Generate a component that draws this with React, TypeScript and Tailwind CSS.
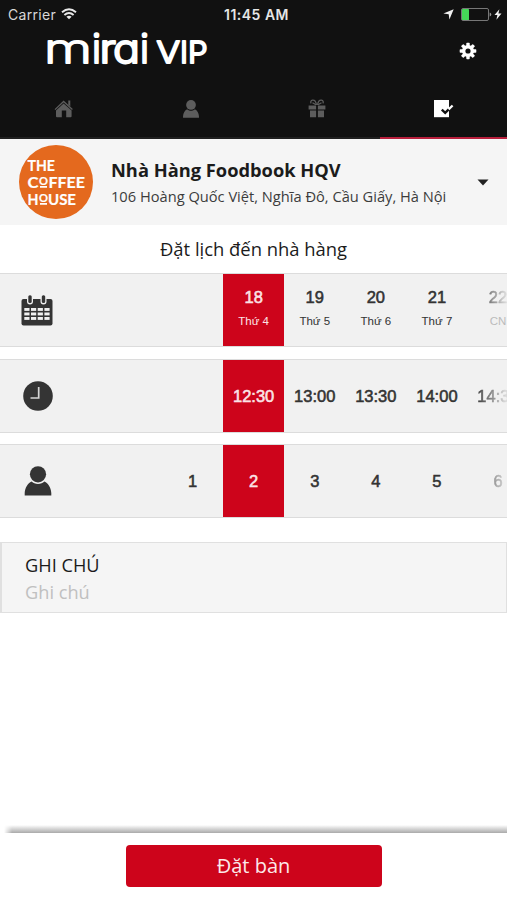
import React from 'react';
import clsx from 'clsx';

interface Slot {
  label: string;
  sub?: string;
  faded?: boolean;
}

interface PickerRowProps {
  icon: React.ReactNode;
  slots: Slot[];
  selected: string;
  className?: string;
}

const DATES: Slot[] = [
  { label: '' },
  { label: '18', sub: 'Thứ 4' },
  { label: '19', sub: 'Thứ 5' },
  { label: '20', sub: 'Thứ 6' },
  { label: '21', sub: 'Thứ 7' },
  { label: '22', sub: 'CN', faded: true },
];

const TIMES: Slot[] = [
  { label: '' },
  { label: '12:30' },
  { label: '13:00' },
  { label: '13:30' },
  { label: '14:00' },
  { label: '14:30', faded: true },
];

const GUESTS: Slot[] = [
  { label: '1' },
  { label: '2' },
  { label: '3' },
  { label: '4' },
  { label: '5' },
  { label: '6', faded: true },
];

// wordmark letters are stretched one by one
const WORDMARK = [
  { char: 'm', x: -1, width: 48, size: 40, weight: 200 },
  { char: 'i', x: 47, width: 9, size: 40, weight: 300 },
  { char: 'r', x: 54.5, width: 16.5, size: 40, weight: 300 },
  { char: 'a', x: 68, width: 27, size: 40, weight: 300 },
  { char: 'i', x: 95, width: 9, size: 40, weight: 300 },
  { char: 'V', x: 111.5, width: 23.5, size: 30, weight: 300 },
  { char: 'I', x: 135, width: 8, size: 30, weight: 300 },
  { char: 'P', x: 143, width: 19.5, size: 30, weight: 300 },
];

const UserIcon = ({ className }: { className?: string }) => (
  <svg viewBox="0 0 28 30" className={className} fill="currentColor">
    <circle cx="14" cy="8.300" r="8.100" />
    <path d="M7.600 15.600C9.200 17.200 11.400 18.100 14 18.100s4.800-.9 6.400-2.500c3.900 1.900 6.600 6.200 6.900 11.500V29.600H.7v-2.500C1 21.800 3.700 17.500 7.600 15.600Z" />
  </svg>
);

const HomeIcon = () => (
  <svg viewBox="0 0 20 18" className="ml-[2px] h-[18px] w-[20px]">
    <path d="M1 9.600 9.600 1.500 18.400 9.600" fill="none" stroke="currentColor" strokeWidth="1.300" />
    <path d="M14.300 0.400h2v6l-2-1.900z" fill="currentColor" />
    <path d="M2 10.400 9.600 3.600 17.600 10.400V16.200Q17.600 17.200 16.600 17.200H12.200V10.600H7.800V17.200H3Q2 17.200 2 16.200Z" fill="currentColor" />
  </svg>
);

const GiftIcon = () => (
  <svg viewBox="0 0 18 19" className="h-[19px] w-[18px]" fill="currentColor">
    <g fill="none" stroke="currentColor" strokeWidth="1.300">
      <path d="M8.500 6C8 3 6.500 1 4.600 1.200 2.700 1.400 2.300 3.200 3.200 4.300" />
      <path d="M9.500 6C10 3 11.500 1 13.400 1.200c1.900.2 2.300 2 1.400 3.100" />
      <path d="M4.500 3.800 8 5.800M13.500 3.800 10 5.800" />
    </g>
    <path d="M.6 6.400h7.500v4.200H.6zM9.900 6.400h7.500v4.200H9.900zM2 11.600h6.100v6.700H2zM9.900 11.600H16v6.700H9.900z" />
  </svg>
);

const BookingIcon = () => (
  <svg viewBox="0 0 21 19" className="h-[19px] w-[21px]">
    <path d="M1 1h15v17.200H1z" fill="#fff" />
    <path d="M8.800 10.600 12.200 13.800 16.200 9.800" fill="none" stroke="#111" strokeWidth="2.400" />
    <path d="M15.600 10.400 19.600 6.500" fill="none" stroke="#fff" strokeWidth="2.200" />
  </svg>
);

const GearIcon = () => (
  <svg viewBox="-9 -9 18 18" className="h-[18px] w-[18px]">
    <g fill="#fff">
      {[0, 45, 90, 135].map((deg) => (
        <rect key={deg} x="-1.700" y="-8.300" width="3.400" height="16.600" rx=".7" transform={`rotate(${deg})`} />
      ))}
      <circle r="6" />
    </g>
    <circle r="2.600" fill="#111" />
  </svg>
);

const CalendarIcon = () => (
  <svg viewBox="0 0 32 31" className="h-[31px] w-[32px]">
    <rect x=".5" y="4" width="31" height="26.500" rx="2" fill="#343434" />
    {[7, 20.5].map((x) => (
      <g key={x}>
        <rect x={x - 1} y="0" width="6" height="9.500" rx="3" fill="#f0f0f0" />
        <rect x={x + 0.3} y=".3" width="3.400" height="7.600" rx="1.500" fill="#343434" />
      </g>
    ))}
    {[13, 17.5, 22].map((y) =>
      [3.3, 10, 16.7, 23.4].map((x) => (
        <rect key={`${x}-${y}`} x={x} y={y} width="5.200" height="2.900" fill="#f0f0f0" />
      ))
    )}
  </svg>
);

const ClockIcon = () => (
  <svg viewBox="0 0 30 30" className="ml-[1px] h-[30px] w-[30px]">
    <circle cx="15" cy="15" r="14.800" fill="#343434" />
    <path d="M15.700 6v11H7.500" fill="none" stroke="#d5d5d5" strokeWidth="1.700" />
  </svg>
);

const StatusBar = () => (
  <div className="flex h-[28px] items-center pl-2 pr-[5px] font-['Inter',sans-serif] text-[14px] text-[#d8d8d8]">
    <div className="flex flex-1 items-center gap-[5px]">
      <span className="tracking-[0.3px]">Carrier</span>
      <svg viewBox="0 0 16 12" className="h-[12px] w-[16px]" fill="none" stroke="#e8e8e8" strokeWidth="1.900">
        <path d="M1 4.300Q8-1.900 15 4.300" />
        <path d="M3.400 7Q8 3 12.600 7" />
        <path d="M8 11.300 5.400 8.700Q8 6.600 10.600 8.700Z" fill="#e8e8e8" stroke="none" />
      </svg>
    </div>
    <span className="pl-[3px] text-[14px] font-semibold tracking-[0.5px] text-[#e6e6e6]">11:45 AM</span>
    <div className="flex flex-1 items-center justify-end">
      <svg viewBox="0 0 11 11" className="mr-[7px] h-[11px] w-[11px]">
        <path d="M10.700.3 6.400 10.500 5.700 5.300.4 4.600Z" fill="#f0f0f0" />
      </svg>
      <svg viewBox="0 0 31 13" className="mr-[2px] h-[13px] w-[31px]">
        <rect x=".5" y=".5" width="27" height="12" rx="1.500" fill="none" stroke="#777" />
        <rect x="1" y="1" width="7" height="11" rx=".6" fill="#45d858" />
        <path d="M28.700 4.500q1.600.4 1.600 2t-1.600 2z" fill="#999" />
      </svg>
      <svg viewBox="0 0 8 11" className="h-[11px] w-[8px]">
        <path d="M5.400.2.5 6H3.400L2.400 10.800 7.500 4.600H4.400Z" fill="#f4f4f4" />
      </svg>
    </div>
  </div>
);

const PickerRow: React.FC<PickerRowProps> = ({ icon, slots, selected, className }) => (
  <div className={clsx('flex h-[74px] shrink-0 overflow-hidden border-y border-[#dcdcdc] bg-[#f1f1f1]', className)}>
    <div className="flex w-[74px] shrink-0 items-center justify-center">{icon}</div>
    <div className="w-[88px] shrink-0" />
    {slots.map((slot, i) => {
      const active = slot.label === selected;
      return (
        <div
          key={i}
          className={clsx(
            "flex w-[61.1px] shrink-0 flex-col items-center justify-center font-['Liberation_Sans',sans-serif]",
            active ? 'bg-[#cd041b] text-[#fbe3e6]' : 'text-[#333]',
            slot.sub && 'pb-[5px]'
          )}
        >
          <span
            className={clsx(
              'w-full text-center text-[16.5px] leading-[20px] [-webkit-text-stroke:0.55px]',
              slot.faded && 'bg-linear-to-r from-[#444] from-18% to-[#d8d8d8] to-62% bg-clip-text text-transparent'
            )}
          >
            {slot.label}
          </span>
          {slot.sub && (
            <span className={clsx('mt-[6px] text-[11.5px] leading-[16px]', slot.faded && 'text-[#bbb]')}>{slot.sub}</span>
          )}
        </div>
      );
    })}
  </div>
);

export default function App() {
  const tabs = [
    { key: 'home', icon: <HomeIcon /> },
    { key: 'profile', icon: <UserIcon className="ml-[1px] h-[18px] w-[18px]" /> },
    { key: 'gifts', icon: <GiftIcon /> },
    { key: 'booking', icon: <BookingIcon /> },
  ];

  return (
    <div className="flex h-[900px] w-[507px] flex-col overflow-hidden bg-white font-['Open_Sans',sans-serif] text-[#1b1b1b]">
      <header className="h-[139px] shrink-0 bg-[#111]">
        <StatusBar />
        <div className="flex h-[52px] items-start justify-between pl-[45px] pr-[30px]">
          <svg viewBox="0 0 164 40" className="h-[40px] w-[164px] overflow-visible">
            <g
              fill="#fff"
              stroke="#fff"
              strokeWidth="2"
              strokeLinejoin="round"
              className="font-['Inter',sans-serif]"
              style={{ fontFeatureSettings: '"cv11" 1' }}
            >
              {WORDMARK.map((l) => (
                <text
                  key={l.x}
                  x={l.x}
                  y="35"
                  fontSize={l.size}
                  fontWeight={l.weight}
                  textLength={l.width}
                  lengthAdjust="spacingAndGlyphs"
                >
                  {l.char}
                </text>
              ))}
            </g>
          </svg>
          <div className="mt-[14px]">
            <GearIcon />
          </div>
        </div>
        {/* Tabs */}
        <nav className="flex h-[59px]">
          {tabs.map((tab) => (
            <div
              key={tab.key}
              className={clsx(
                'flex flex-1 items-center justify-center border-b-2 text-[#5d5d5d]',
                tab.key === 'booking' ? 'border-[#b91f3c]' : 'border-[#202020]'
              )}
            >
              {tab.icon}
            </div>
          ))}
        </nav>
      </header>

      {/* Restaurant */}
      <section className="flex h-[86px] shrink-0 items-center bg-[#f5f5f5] pl-[19px] pr-[18px]">
        <div className="flex h-[74px] w-[74px] items-center rounded-full bg-[#e4691e]">
          <svg viewBox="0 0 74 74" className="h-[74px] w-[74px]">
            <g fill="#fff" className="font-['Lato',sans-serif] font-bold" fontSize="15.500" stroke="#fff" strokeWidth=".2">
              <text x="8.500" y="25.500" textLength="27.500" lengthAdjust="spacingAndGlyphs">THE</text>
              <text x="8.500" y="42.700" textLength="11" lengthAdjust="spacingAndGlyphs">C</text>
              <text x="20" y="39.500" fontSize="11.500" textLength="9" lengthAdjust="spacingAndGlyphs">O</text>
              <text x="29.500" y="42.700" textLength="36.500" lengthAdjust="spacingAndGlyphs">FFEE</text>
              <text x="8.500" y="59.700" textLength="11" lengthAdjust="spacingAndGlyphs">H</text>
              <text x="20" y="56.500" fontSize="11.500" textLength="9" lengthAdjust="spacingAndGlyphs">O</text>
              <text x="29" y="59.700" textLength="28" lengthAdjust="spacingAndGlyphs">USE</text>
            </g>
            <path d="M21 41.900h7M21 58.900h7" stroke="#fff" strokeWidth="1.600" />
          </svg>
        </div>
        <div className="ml-[18px] flex-1 whitespace-nowrap pt-[1px]">
          <h1 className="text-[18.3px] font-bold leading-[26px]">Nhà Hàng Foodbook HQV</h1>
          <p className="text-[14.65px] leading-[26px] text-[#3c3c3c]">106 Hoàng Quốc Việt, Nghĩa Đô, Cầu Giấy, Hà Nội</p>
        </div>
        <svg viewBox="0 0 12 7" className="h-[7px] w-[12px]">
          <path d="M.5.400h11L6 6.600Z" fill="#222" />
        </svg>
      </section>

      <h2 className="h-[48px] shrink-0 text-center text-[18.4px] leading-[48px]">Đặt lịch đến nhà hàng</h2>

      <PickerRow icon={<CalendarIcon />} slots={DATES} selected="18" />
      <PickerRow icon={<ClockIcon />} slots={TIMES} selected="12:30" className="mt-[12px]" />
      <PickerRow icon={<UserIcon className="ml-[1px] h-[30px] w-[28px] text-[#343434]" />} slots={GUESTS} selected="2" className="mt-[11px]" />

      {/* Note */}
      <section className="mt-[24px] h-[71px] shrink-0 border border-l-2 border-[#e0e0e0] bg-[#f5f5f5] pl-[23px] pt-[9px]">
        <div className="text-[18.2px] leading-[27px]">GHI CHÚ</div>
        <div className="text-[18.2px] leading-[26px] text-[#c0c0c0]">Ghi chú</div>
      </section>

      <footer className="mt-auto shrink-0">
        <div className="ml-[4px] h-[8px] bg-linear-to-b from-white to-[#aaa] mask-l-from-[495px] mask-l-to-[503px]" />
        <div className="flex h-[67px] justify-center bg-white pt-[12px]">
          <button className="h-[42px] w-[256px] rounded-[4px] bg-[#cd041b] text-[20px] leading-[42px] text-[#fce9ea]">Đặt bàn</button>
        </div>
      </footer>
    </div>
  );
}
